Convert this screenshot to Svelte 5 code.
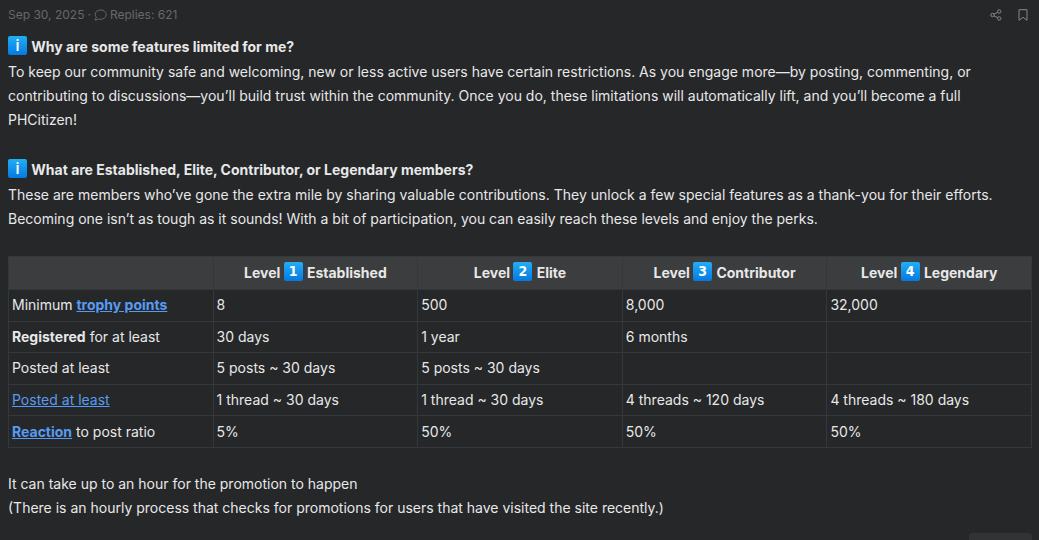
<script>
    const levels = [
        { number: 1, name: 'Established' },
        { number: 2, name: 'Elite' },
        { number: 3, name: 'Contributor' },
        { number: 4, name: 'Legendary' }
    ];

    const rows = [
        { before: 'Minimum ', link: 'trophy points', bold: true, values: ['8', '500', '8,000', '32,000'] },
        { strong: 'Registered', after: ' for at least', values: ['30 days', '1 year', '6 months', ''] },
        { before: 'Posted at least', values: ['5 posts ~ 30 days', '5 posts ~ 30 days', '', ''] },
        {
            link: 'Posted at least',
            values: ['1 thread ~ 30 days', '1 thread ~ 30 days', '4 threads ~ 120 days', '4 threads ~ 180 days']
        },
        { link: 'Reaction', bold: true, after: ' to post ratio', values: ['5%', '50%', '50%', '50%'] }
    ];
</script>

<article class="post">
    <header class="meta">
        <div class="info">
            <time datetime="2025-09-30">Sep 30, 2025</time>
            <span>·</span>
            <svg viewBox="0 0 13 12" width="13" height="12">
                <path d="M6.7 1C3.5 1 1.2 2.9 1.2 5.3c0 1.3.5 2.2 1.2 3L1 11c1.5 0 2.6-.4 3.4-1 .7.2 1.5.3 2.3.3 3.1 0 5.5-2 5.5-4.8C12.2 2.9 9.8 1 6.7 1z" />
            </svg>
            <span>Replies: 621</span>
        </div>
        <div class="actions">
            <button type="button" aria-label="Share">
                <svg viewBox="0 0 12 12" width="12" height="12">
                    <circle cx="9.2" cy="2.5" r="1.7" />
                    <circle cx="2.5" cy="6" r="1.7" />
                    <circle cx="9.2" cy="9.5" r="1.7" />
                    <path d="M4 5.2 7.7 3.3M4 6.8l3.7 1.9" />
                </svg>
            </button>
            <button type="button" aria-label="Bookmark">
                <svg viewBox="0 0 10 12" width="10" height="12">
                    <path d="M1 .7h8v10.6L5 8.3l-4 3z" />
                </svg>
            </button>
        </div>
    </header>

    <section>
        <h2><span class="emoji letter">i</span> Why are some features limited for me?</h2>
        <p>
            To keep our community safe and welcoming, new or less active users have certain restrictions. As you
            engage more—by posting, commenting, or contributing to discussions—you’ll build trust within the
            community. Once you do, these limitations will automatically lift, and you’ll become a full PHCitizen!
        </p>
    </section>

    <section>
        <h2><span class="emoji letter">i</span> What are Established, Elite, Contributor, or Legendary members?</h2>
        <p>
            These are members who’ve gone the extra mile by sharing valuable contributions. They unlock a few
            special features as a thank-you for their efforts.<br />
            Becoming one isn’t as tough as it sounds! With a bit of participation, you can easily reach these
            levels and enjoy the perks.
        </p>
    </section>

    <table>
        <thead>
            <tr>
                <th></th>
                {#each levels as level}
                    <th scope="col">Level <span class="emoji">{level.number}</span> {level.name}</th>
                {/each}
            </tr>
        </thead>
        <tbody>
            {#each rows as row}
                <tr>
                    <td>
                        {row.before ?? ''}{#if row.strong}<b>{row.strong}</b>{/if}{#if row.link}<a href="#top" class:bold={row.bold}>{row.link}</a>{/if}{row.after ?? ''}
                    </td>
                    {#each row.values as value}
                        <td>{value}</td>
                    {/each}
                </tr>
            {/each}
        </tbody>
    </table>

    <p>
        It can take up to an hour for the promotion to happen<br />
        (There is an hourly process that checks for promotions for users that have visited the site recently.)
    </p>

    <footer>
        <button type="button" class="reply" aria-label="Reply"></button>
    </footer>
</article>

<style>
    :global(body) {
        margin: 0;
        background: #252728;
    }

    .post {
        box-sizing: border-box;
        height: 100vh;
        overflow: hidden;
        padding: 0 7px 0 8px;
        background: #252728;
        color: #e8e8e8;
        font-family: Inter, 'Liberation Sans', sans-serif;
        font-size: 14px;
        line-height: 24px;
    }

    .meta {
        display: flex;
        justify-content: space-between;
        align-items: center;
        height: 30px;
        margin-bottom: 4px;
        color: #66696b;
        font-size: 12px;
    }

    .info {
        display: flex;
        align-items: center;
        gap: 3px;
    }

    .actions {
        display: flex;
        gap: 16px;
        padding-right: 4px;
    }

    .actions button {
        display: flex;
        padding: 0;
        border: 0;
        background: none;
        color: #85888a;
        cursor: pointer;
    }

    svg {
        fill: none;
        stroke: currentColor;
        stroke-width: 1;
    }

    section {
        margin-bottom: 25px;
    }

    h2 {
        margin: 0;
        font-size: 14px;
        font-weight: 700;
        line-height: 26px;
    }

    p {
        margin: 0;
    }

    /* Blue keycap squares */
    .emoji {
        display: inline-block;
        width: 19px;
        height: 19px;
        margin: -4px 1px 0 0;
        border-radius: 2px;
        background: linear-gradient(#22aef5, #0479e2);
        color: #fff;
        font-family: 'DejaVu Sans Condensed', 'DejaVu Sans', sans-serif;
        font-size: 14px;
        font-weight: 700;
        line-height: 19px;
        text-align: center;
        vertical-align: 1px;
    }

    .letter {
        font-family: 'Open Sans', sans-serif;
        font-size: 16px;
        font-weight: 600;
    }

    th .emoji {
        vertical-align: 2px;
    }

    table {
        width: 100%;
        height: 192px;
        margin-bottom: 24px;
        border-collapse: collapse;
        table-layout: fixed;
    }

    th,
    td {
        padding: 0 3px;
        border: 1px solid #35383a;
        text-align: left;
    }

    th {
        height: 32px;
        background: #3b3d3e;
        font-weight: 700;
        text-align: center;
    }

    a {
        color: #589bf3;
        text-decoration: underline;
    }

    b,
    .bold {
        font-weight: 700;
    }

    footer {
        display: flex;
        justify-content: flex-end;
        margin-top: 13px;
    }

    .reply {
        width: 63px;
        height: 28px;
        border: 0;
        border-radius: 3px;
        background: #323335;
    }
</style>
